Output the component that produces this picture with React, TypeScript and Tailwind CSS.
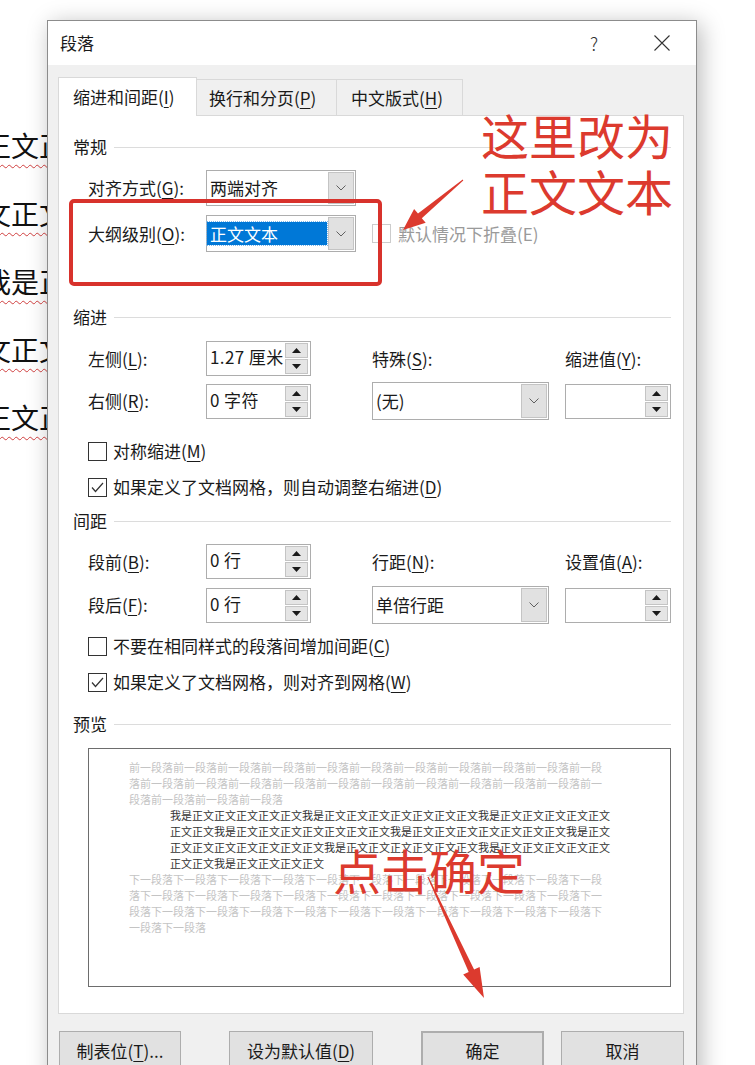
import React from "react";

const prev1 = "前一段落".repeat(10) + "前一段";
const prev2 = "落" + "前一段落".repeat(10) + "前一";
const prev3 = "段落" + "前一段落".repeat(3);
const body1 = "我是" + "正文".repeat(5) + "我是" + "正文".repeat(7) + "我是" + "正文".repeat(5);
const body2 = "正文正文我是" + "正文".repeat(7) + "我是" + "正文".repeat(7) + "我是正文";
const body3 = "正文".repeat(7) + "我是" + "正文".repeat(6) + "我是" + "正文".repeat(5);
const body4 = "正文正文我是正文正文正文正文";
const next1 = "下一段落".repeat(10) + "下一段";
const next2 = "落" + "下一段落".repeat(10) + "下一";
const next3 = "段落" + "下一段落".repeat(10) + "下";
const next4 = "一段落下一段落";

function Key({ label, k, tail = "" }: { label: string; k: string; tail?: string }) {
  return (
    <span className="whitespace-nowrap">
      {label}(<span className="underline underline-offset-[3px] decoration-1">{k}</span>){tail}
    </span>
  );
}

function Chevron() {
  return (
    <svg width="10" height="6" viewBox="0 0 10 6">
      <path d="M0.5 0.5 L5 5 L9.5 0.5" fill="none" stroke="#606060" strokeWidth="1" />
    </svg>
  );
}

function Select({ value, className, selected }: { value: string; className: string; selected?: boolean }) {
  return (
    <div className={`flex border border-[#adadad] bg-white ${className}`}>
      <div className="flex flex-1 items-center">
        {selected ? (
          <div className="flex h-[23px] w-full items-center bg-[#0078d7] pl-[3px] text-white outline outline-1 outline-dotted outline-[#7fb8ea]">
            {value}
          </div>
        ) : (
          <span className="pl-[3px]">{value}</span>
        )}
      </div>
      <div className="m-[1px] flex w-[26px] items-center justify-center border border-[#c4c4c4] bg-[#e1e1e1]">
        <Chevron />
      </div>
    </div>
  );
}

function Spin({ value, className }: { value: string; className: string }) {
  return (
    <div className={`flex h-[35px] border border-[#adadad] bg-white ${className}`}>
      <div className="flex-1 overflow-hidden whitespace-nowrap pl-[3px] pt-[3px] leading-[24px] tracking-[0.4px]">{value}</div>
      <div className="mr-[2px] flex w-[23px] flex-col gap-[1px] py-[1px]">
        <div className="flex flex-1 items-center justify-center border border-[#c4c4c4] bg-[#e5e5e5]">
          <svg width="9" height="5" viewBox="0 0 9 5">
            <path d="M0 5 L4.5 0 L9 5 Z" fill="#1a1a1a" />
          </svg>
        </div>
        <div className="flex flex-1 items-center justify-center border border-[#c4c4c4] bg-[#e5e5e5]">
          <svg width="9" height="5" viewBox="0 0 9 5">
            <path d="M0 0 L4.5 5 L9 0 Z" fill="#1a1a1a" />
          </svg>
        </div>
      </div>
    </div>
  );
}

function Check({ checked, children, className = "" }: { checked?: boolean; children: React.ReactNode; className?: string }) {
  return (
    <div className={`flex h-[24px] items-center gap-[6px] ${className}`}>
      <div className="flex h-[19px] w-[19px] items-center justify-center border border-[#333333] bg-white">
        {checked && (
          <svg width="13" height="11" viewBox="0 0 13 11">
            <path d="M1 5.5 L4.5 9.5 L12 1" fill="none" stroke="#333333" strokeWidth="1.2" />
          </svg>
        )}
      </div>
      {children}
    </div>
  );
}

function Section({ title, className = "" }: { title: string; className?: string }) {
  return (
    <div className={`flex h-[24px] items-center gap-[7px] ${className}`}>
      <span>{title}</span>
      <div className="h-px flex-1 bg-[#dcdcdc]" />
    </div>
  );
}

function Button({ children, className = "" }: { children: React.ReactNode; className?: string }) {
  return (
    <div className={`flex h-[40px] items-center justify-center border border-[#adadad] bg-[#e1e1e1] ${className}`}>
      {children}
    </div>
  );
}

// the document behind the dialog, only its left edge shows
function DocBackground() {
  const lines = ["正文正", "文正文", "我是正", "文正文", "正文正"];
  return (
    <div className="-ml-[17px] pt-[111px] text-[28px] text-[#111111]">
      {lines.map((l, i) => (
        <div key={i} className="flex h-[68px] items-center">
          <span className="underline decoration-wavy decoration-[#d04040] decoration-1 underline-offset-[7px]">{l}</span>
        </div>
      ))}
    </div>
  );
}

function Dialog() {
  return (
    <div className="absolute left-[47px] top-[20px] h-[1070px] w-[650px] border border-[#8c8c8c] bg-[#f0f0f0] text-[17px] text-[#1a1a1a] shadow-[4px_4px_22px_rgba(0,0,0,0.28)]">
      <div className="flex h-[44px] items-center bg-white pl-[12px]">
        <span>段落</span>
        <span className="ml-auto mr-[56px] text-[18px] font-light text-[#333333]">?</span>
        <svg className="mr-[26px]" width="16" height="16" viewBox="0 0 16 16">
          <path d="M0.5 0.5 L15.5 15.5 M15.5 0.5 L0.5 15.5" stroke="#333333" strokeWidth="1.1" />
        </svg>
      </div>

      <div className="pl-[10px] pr-[12px] pt-[12px]">
        <div className="relative z-10 -mb-px flex h-[39px] items-end">
          <div className="flex h-[39px] w-[139px] items-center border border-b-0 border-[#d9d9d9] bg-white pl-[14px]">
            <Key label="缩进和间距" k="I" />
          </div>
          <div className="flex h-[37px] w-[140px] items-center border border-l-0 border-[#d9d9d9] bg-[#f0f0f0] pl-[12px]">
            <Key label="换行和分页" k="P" />
          </div>
          <div className="flex h-[37px] w-[126px] items-center border border-l-0 border-[#d9d9d9] bg-[#f0f0f0] pl-[14px]">
            <Key label="中文版式" k="H" />
          </div>
        </div>

        <div className="flex h-[899px] flex-col border border-[#d9d9d9] bg-white pl-[14px] pr-[12px] pt-[19px]">
          <Section title="常规" />
          <div className="mt-[11px] flex h-[36px] items-center pl-[15px]">
            <span className="w-[118px]">
              <Key label="对齐方式" k="G" tail=":" />
            </span>
            <Select value="两端对齐" className="h-[36px] w-[150px]" />
          </div>
          <div className="mt-[9px] flex h-[37px] items-center pl-[15px]">
            <span className="w-[118px]">
              <Key label="大纲级别" k="O" tail=":" />
            </span>
            <Select value="正文文本" selected className="h-[37px] w-[150px]" />
            <div className="ml-[16px] h-[19px] w-[19px] border border-[#cccccc] bg-white" />
            <span className="ml-[7px] text-[#9a9a9a]">默认情况下折叠(E)</span>
          </div>

          <Section title="缩进" className="mt-[53px]" />
          <div className="mt-[12px] flex h-[35px] items-center pl-[15px]">
            <span className="w-[118px]">
              <Key label="左侧" k="L" tail=":" />
            </span>
            <Spin value="1.27 厘米" className="w-[105px]" />
            <span className="ml-[61px] w-[193px]">
              <Key label="特殊" k="S" tail=":" />
            </span>
            <Key label="缩进值" k="Y" tail=":" />
          </div>
          <div className="mt-[6px] flex h-[38px] items-center pl-[15px]">
            <span className="w-[118px]">
              <Key label="右侧" k="R" tail=":" />
            </span>
            <Spin value="0 字符" className="w-[105px]" />
            <Select value="(无)" className="ml-[61px] h-[38px] w-[177px]" />
            <Spin value="" className="ml-[16px] w-[106px]" />
          </div>
          <Check className="mt-[19px] pl-[15px]">
            <Key label="对称缩进" k="M" />
          </Check>
          <Check checked className="mt-[12px] pl-[15px]">
            <span>
              如果定义了文档网格，则自动调整右缩进(<span className="underline underline-offset-[3px] decoration-1">D</span>)
            </span>
          </Check>

          <Section title="间距" className="mt-[10px]" />
          <div className="mt-[11px] flex h-[35px] items-center pl-[15px]">
            <span className="w-[118px]">
              <Key label="段前" k="B" tail=":" />
            </span>
            <Spin value="0 行" className="w-[105px]" />
            <span className="ml-[61px] w-[193px]">
              <Key label="行距" k="N" tail=":" />
            </span>
            <Key label="设置值" k="A" tail=":" />
          </div>
          <div className="mt-[7px] flex h-[38px] items-center pl-[15px]">
            <span className="w-[118px]">
              <Key label="段后" k="F" tail=":" />
            </span>
            <Spin value="0 行" className="w-[105px]" />
            <Select value="单倍行距" className="ml-[61px] h-[38px] w-[177px]" />
            <Spin value="" className="ml-[16px] w-[106px]" />
          </div>
          <Check className="mt-[10px] pl-[15px]">
            <Key label="不要在相同样式的段落间增加间距" k="C" />
          </Check>
          <Check checked className="mt-[12px] pl-[15px]">
            <span>
              如果定义了文档网格，则对齐到网格(<span className="underline underline-offset-[3px] decoration-1">W</span>)
            </span>
          </Check>

          <Section title="预览" className="mt-[18px]" />
          <div className="ml-[15px] mt-[12px] h-[239px] border border-[#6d6d6d] bg-white pl-[40px] pt-[10px] text-[11px] leading-[16px]">
            <div className="whitespace-nowrap text-[#c4c4c4]">
              <div>{prev1}</div>
              <div>{prev2}</div>
              <div>{prev3}</div>
            </div>
            <div className="whitespace-nowrap pl-[41px] text-[#333333]">
              <div>{body1}</div>
              <div>{body2}</div>
              <div>{body3}</div>
              <div>{body4}</div>
            </div>
            <div className="whitespace-nowrap text-[#c4c4c4]">
              <div>{next1}</div>
              <div>{next2}</div>
              <div>{next3}</div>
              <div>{next4}</div>
            </div>
          </div>
        </div>

        <div className="mt-[17px] flex">
          <Button className="ml-[1px] w-[122px]">
            <Key label="制表位" k="T" tail="..." />
          </Button>
          <Button className="ml-[48px] w-[144px]">
            <Key label="设为默认值" k="D" />
          </Button>
          <Button className="ml-[48px] w-[123px] border-2 border-[#0078d7]">确定</Button>
          <Button className="ml-[17px] w-[123px]">取消</Button>
        </div>
      </div>
    </div>
  );
}

function Annotations() {
  return (
    <>
      <div className="absolute left-[69px] top-[199px] h-[87px] w-[313px] rounded-[5px] border-4 border-[#d8322c]" />
      <div className="absolute left-[481px] top-[106px] text-[48px] leading-[56px] text-[#dc3a2e]">
        <div>这里改为</div>
        <div>正文文本</div>
      </div>
      <div className="absolute left-[333px] top-[841px] text-[48px] leading-[56px] text-[#dc3a2e]">点击确定</div>
      <svg className="pointer-events-none absolute left-0 top-0" width="755" height="1065" viewBox="0 0 755 1065">
        <polygon
          points="463.3,180.4 421.8,218.2 425.7,222.8 403,230 414.1,209 418,213.6 462.7,179.6"
          fill="#dc3a2e"
        />
        <polygon
          points="428.5,876.8 474.1,969.4 479.6,966.9 484,998 463.2,974.5 468.7,972 427.5,877.2"
          fill="#dc3a2e"
        />
      </svg>
    </>
  );
}

export default function App() {
  return (
    <div className="relative h-[1065px] w-[755px] overflow-hidden bg-white font-['Noto_Sans_CJK_SC','Noto_Sans',sans-serif]">
      <DocBackground />
      <Dialog />
      <Annotations />
    </div>
  );
}
